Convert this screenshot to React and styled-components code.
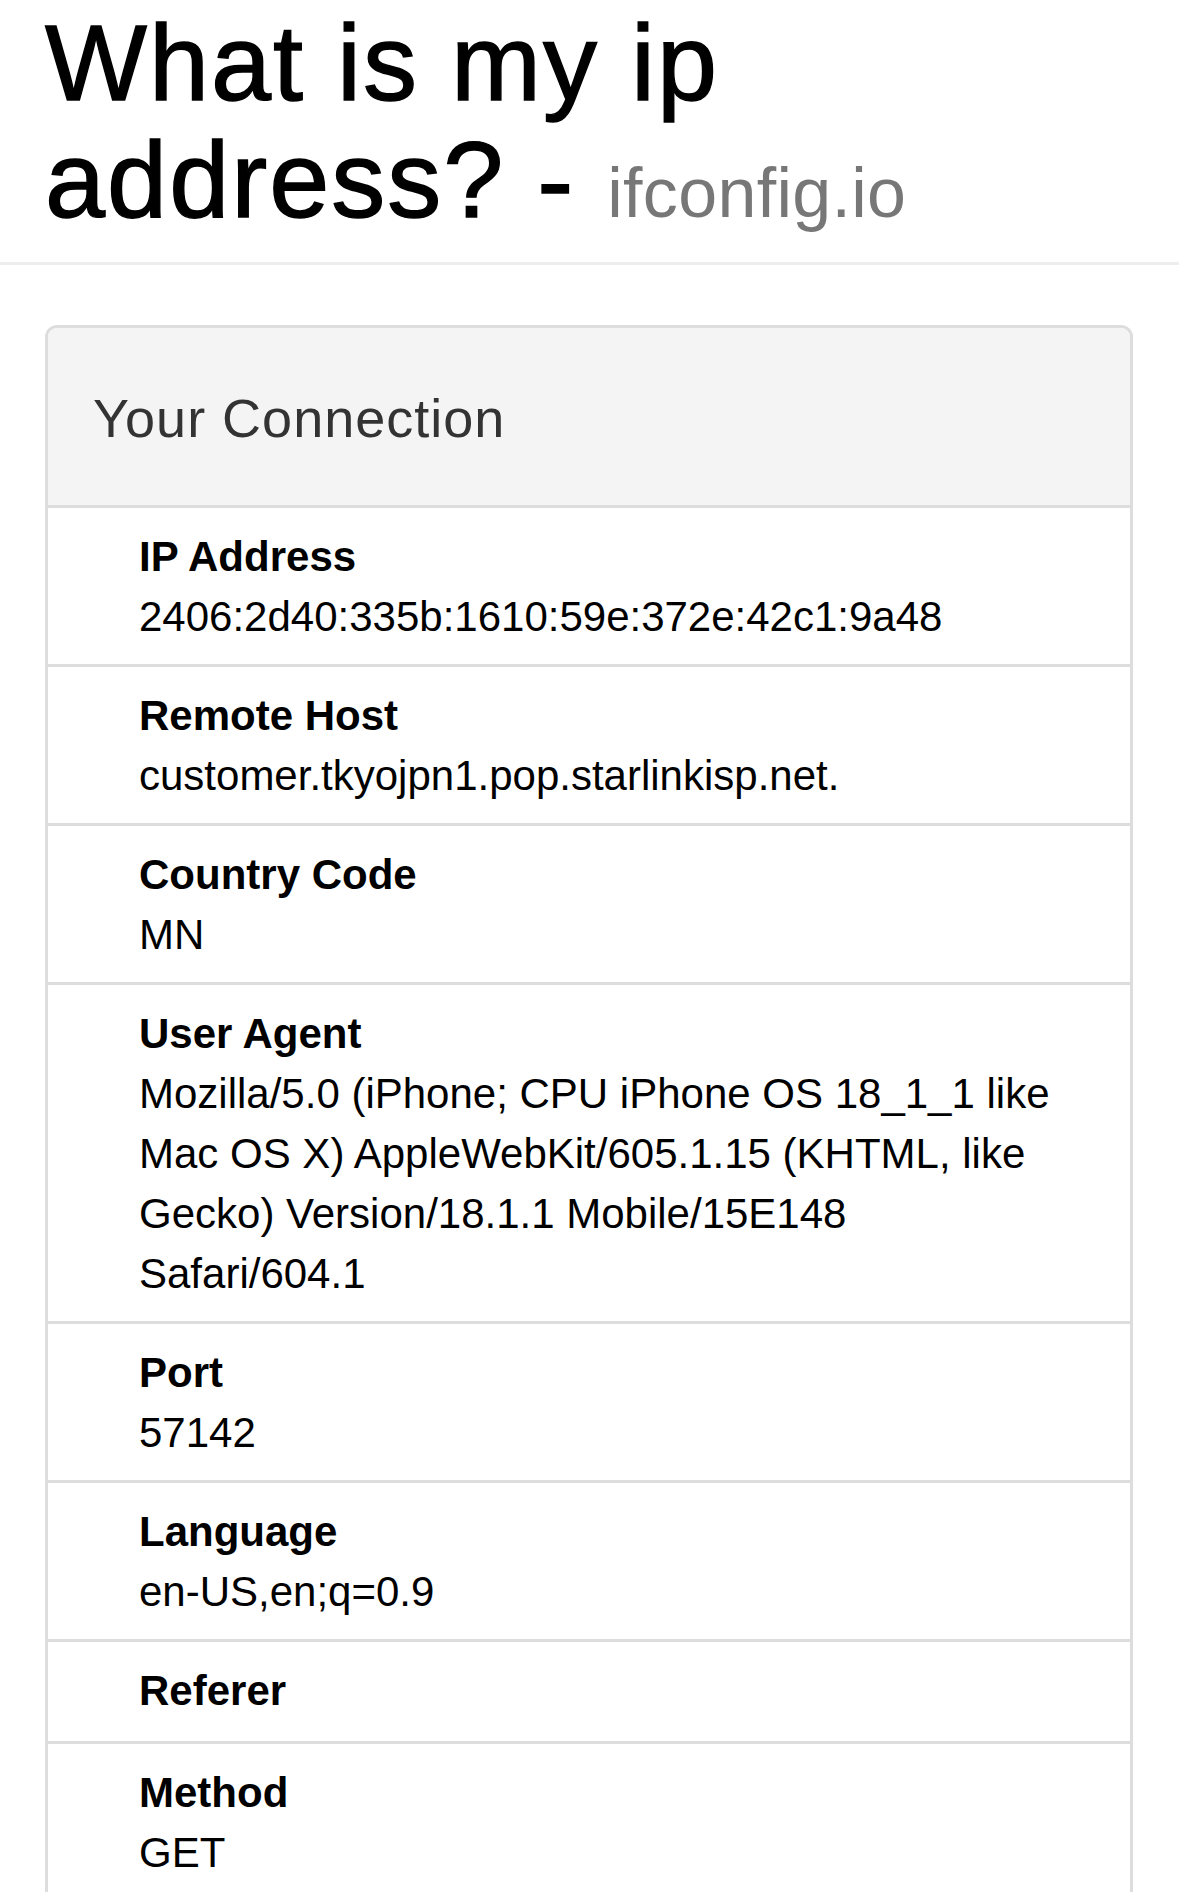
import styled, { createGlobalStyle } from "styled-components";

const GlobalStyle = createGlobalStyle`
  html, body {
    margin: 0;
    padding: 0;
    background: #fff;
    overflow: hidden;
  }
  body {
    font-family: "Liberation Sans", Helvetica, Arial, sans-serif;
    color: #000;
  }
`;

const PageHeader = styled.header`
  padding: 4px 45px 24px;
  border-bottom: 3px solid #eee;
`;

const Title = styled.h1`
  margin: 0;
  font-size: 108px;
  line-height: 117px;
  font-weight: 500;
  letter-spacing: 2px;
  -webkit-text-stroke: 1.4px #000;
  color: #000;
`;

const Sub = styled.small`
  font-size: 70px;
  line-height: 1;
  font-weight: 400;
  letter-spacing: 0.3px;
  -webkit-text-stroke: 0;
  color: #777;
`;

const Main = styled.main`
  padding: 60px 46px 0 45px;
`;

const Panel = styled.section`
  border: 3px solid #ddd;
  border-radius: 12px;
  overflow: hidden;
  background: #fff;
`;

const PanelHeading = styled.div`
  background: #f4f4f4;
  padding: 60px 45px 57px;
`;

const PanelTitle = styled.h3`
  margin: 0;
  font-size: 54px;
  line-height: 60px;
  font-weight: 400;
  letter-spacing: 1px;
  color: #333;
`;

const List = styled.dl`
  margin: 0;
`;

const Row = styled.div`
  border-top: 3px solid #ddd;
  padding: 19px 68px ${(p) => (p.$empty ? "20px" : "17px")} 91px;
  font-size: 42px;
  line-height: 60px;
`;

const Label = styled.dt`
  font-weight: 700;
  color: #000;
`;

const Value = styled.dd`
  margin: 0;
  color: #000;
  word-wrap: break-word;
`;

const rows = [
  { label: "IP Address", value: "2406:2d40:335b:1610:59e:372e:42c1:9a48" },
  { label: "Remote Host", value: "customer.tkyojpn1.pop.starlinkisp.net." },
  { label: "Country Code", value: "MN" },
  {
    label: "User Agent",
    value:
      "Mozilla/5.0 (iPhone; CPU iPhone OS 18_1_1 like Mac OS X) AppleWebKit/605.1.15 (KHTML, like Gecko) Version/18.1.1 Mobile/15E148 Safari/604.1",
  },
  { label: "Port", value: "57142" },
  { label: "Language", value: "en-US,en;q=0.9" },
  { label: "Referer", value: "" },
  { label: "Method", value: "GET" },
];

const App = () => {
  return (
    <>
      <GlobalStyle />
      <PageHeader>
        <Title>
          What is my ip address? - <Sub>ifconfig.io</Sub>
        </Title>
      </PageHeader>
      <Main>
        <Panel>
          <PanelHeading>
            <PanelTitle>Your Connection</PanelTitle>
          </PanelHeading>
          <List>
            {rows.map((r) => (
              <Row key={r.label} $empty={!r.value}>
                <Label>{r.label}</Label>
                {r.value && <Value>{r.value}</Value>}
              </Row>
            ))}
          </List>
        </Panel>
      </Main>
    </>
  );
};

export default App;
